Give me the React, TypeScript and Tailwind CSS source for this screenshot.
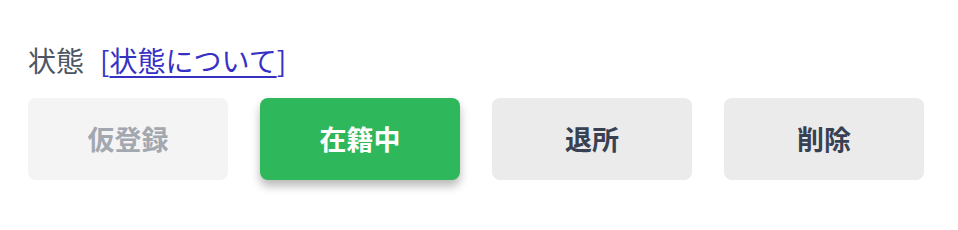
const statuses = [
  { label: "仮登録", kind: "disabled" },
  { label: "在籍中", kind: "active" },
  { label: "退所", kind: "normal" },
  { label: "削除", kind: "normal" },
];

export default function App() {
  return (
    <div
      className="w-[958px] h-[230px] bg-white px-7 pt-[44px]"
      style={{ fontFamily: '"Noto Sans CJK JP", "Noto Sans", sans-serif' }}
    >
      <div className="flex items-center gap-4 text-[28px] leading-[32px] text-[#4b5563]">
        <span>状態</span>
        <a href="#" className="text-[#3730c4]">
          [<span className="underline underline-offset-[4px] decoration-2">状態について</span>]
        </a>
      </div>
      <div className="mt-[22px] flex gap-8">
        {statuses.map((s) => (
          <button
            key={s.label}
            disabled={s.kind === "disabled"}
            className={
              s.kind === "active"
                ? "w-[200px] h-[82px] rounded-lg bg-[#2fb75c] text-white text-[27px] font-bold shadow-[0_6px_10px_rgba(0,0,0,0.28)]"
                : s.kind === "disabled"
                ? "w-[200px] h-[82px] rounded-lg bg-[#f4f4f5] text-[#a3a7b0] text-[27px] font-bold"
                : "w-[200px] h-[82px] rounded-lg bg-[#ebebeb] text-[#384152] text-[27px] font-bold"
            }
          >
            {s.label}
          </button>
        ))}
      </div>
    </div>
  );
}
